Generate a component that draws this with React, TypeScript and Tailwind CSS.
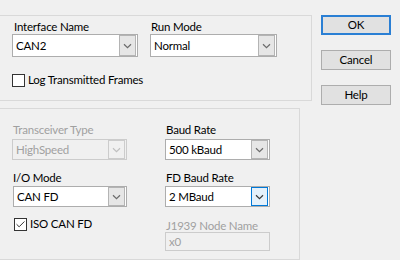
import { Check } from "lucide-react";

function Chevron({ color = "#6b6b6b" }: { color?: string }) {
  return (
    <svg width="9" height="6" viewBox="0 0 9 6" fill="none">
      <path d="M1 1.2 L4.5 4.6 L8 1.2" stroke={color} strokeWidth="1.2" />
    </svg>
  );
}

function Combo({
  value,
  disabled,
  focused,
  className,
}: {
  value: string;
  disabled?: boolean;
  focused?: boolean;
  className: string;
}) {
  return (
    <div
      className={`flex items-center justify-between border ${
        disabled ? "border-[#cccccc] bg-[#f0f0f0] text-[#a0a0a0]" : "border-[#adadad] bg-white text-black"
      } pl-[3px] pr-[1px] ${className}`}
    >
      <span className="whitespace-nowrap">{value}</span>
      <div
        className={`flex h-full w-[17px] items-center justify-center border ${
          focused
            ? "border-[#0078d7] bg-[#e5f1fb]"
            : disabled
            ? "border-[#cccccc] bg-[#f0f0f0]"
            : "border-[#b4b4b4] bg-[#e6e6e6]"
        }`}
      >
        <Chevron color={disabled ? "#bfbfbf" : focused ? "#3a3a3a" : "#6b6b6b"} />
      </div>
    </div>
  );
}

function CheckBox({ label, checked, className }: { label: string; checked?: boolean; className: string }) {
  return (
    <div className={`flex items-center gap-[3px] ${className}`}>
      <div className="flex h-[13px] w-[13px] items-center justify-center border border-[#333333] bg-white">
        {checked && <Check size={11} strokeWidth={2} color="#222222" />}
      </div>
      <span className="whitespace-nowrap">{label}</span>
    </div>
  );
}

function Btn({ label, primary }: { label: string; primary?: boolean }) {
  return (
    <div
      className={`flex h-[20px] w-[70px] items-center justify-center bg-[#e1e1e1] ${
        primary ? "border-2 border-[#2a7fd4]" : "border border-[#adadad]"
      }`}
    >
      {label}
    </div>
  );
}

export default function App() {
  return (
    <div
      className="flex h-[260px] w-[400px] overflow-hidden bg-[#f0f0f0] text-[11.5px] leading-[14px] tracking-[-0.2px] text-black"
      style={{ fontFamily: 'Lato, "Liberation Sans", sans-serif' }}
    >
      <div className="flex w-[312px] shrink-0 flex-col pt-[15px]">
        {/* top group */}
        <div className="ml-[-2px] h-[91px] w-[314px] border border-[#d9d9d9] pl-[13px] pt-[4px]">
          <div className="flex gap-[12px]">
            <div className="flex w-[126px] flex-col">
              <span className="pl-[2px]">Interface Name</span>
              <Combo value="CAN2" className="h-[23px]" />
            </div>
            <div className="flex w-[127px] flex-col">
              <span className="pl-[1px]">Run Mode</span>
              <Combo value="Normal" className="h-[23px]" />
            </div>
          </div>
          <CheckBox label="Log Transmitted Frames" className="mt-[16px]" />
        </div>

        {/* bottom group */}
        <div className="ml-[-2px] mt-[7px] h-[160px] w-[302px] border border-[#d9d9d9] pl-[13px] pt-[14px]">
          <div className="flex gap-[38px]">
            <div className="flex w-[115px] flex-col">
              <span className="pl-[1px] text-[#a0a0a0]">Transceiver Type</span>
              <Combo value="HighSpeed" disabled className="mt-[2px] h-[21px]" />
              <span className="mt-[11px] pl-[1px]">I/O Mode</span>
              <Combo value="CAN FD" className="ml-[1px] mt-[1px] h-[21px]" />
              <CheckBox label="ISO CAN FD" checked className="ml-[2px] mt-[10px]" />
            </div>
            <div className="flex w-[105px] flex-col">
              <span className="pl-[1px]">Baud Rate</span>
              <Combo value="500 kBaud" className="mt-[2px] h-[21px]" />
              <span className="mt-[11px] pl-[1px]">FD Baud Rate</span>
              <Combo value="2 MBaud" focused className="mt-[1px] h-[21px]" />
              <span className="mt-[12px] pl-[1px] text-[#a0a0a0]">J1939 Node Name</span>
              <div className="mt-[-1px] flex h-[19px] items-center border border-[#cccccc] bg-[#f0f0f0] pl-[3px] text-[#a0a0a0]">
                x0
              </div>
            </div>
          </div>
        </div>
      </div>

      <div className="ml-[9px] flex flex-col gap-[15px] pt-[15px]">
        <Btn label="OK" primary />
        <Btn label="Cancel" />
        <Btn label="Help" />
      </div>
    </div>
  );
}
